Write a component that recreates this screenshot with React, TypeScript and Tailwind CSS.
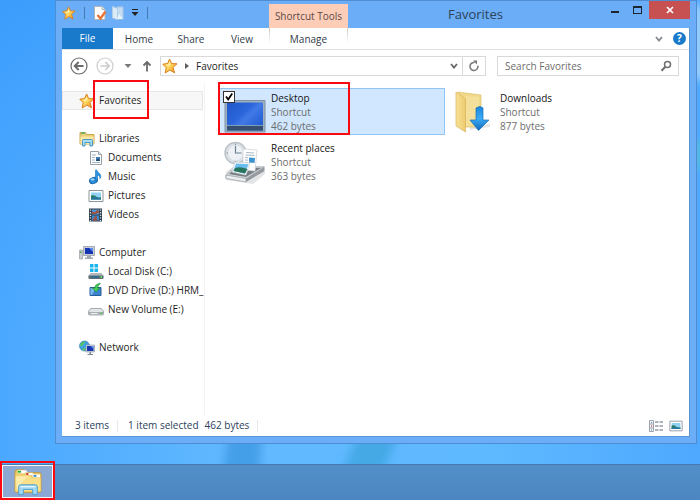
import { ReactNode } from "react";

type IconProps = { className?: string };

const StarIcon = ({ className = "size-4" }: IconProps) => (
  <svg viewBox="0 0 16 16" className={className}>
    <defs>
      <linearGradient id="star" x1="0" y1="0" x2="1" y2="1">
        <stop offset="0" stopColor="#ffc64a" />
        <stop offset="0.5" stopColor="#ffd85e" />
        <stop offset="1" stopColor="#f07f14" />
      </linearGradient>
    </defs>
    <path d="M7.6 1l2 4.6 5.4.2-4.1 3.6 1.7 5.4-4.8-2.7L3.2 15l1-5.3L.8 6.2l4.8-.7z" fill="url(#star)" stroke="#dc7f1c" strokeLinejoin="round" />
    <path d="M7.6 3.2l1 3-2.2 2.6-3-1.8 2.9-.7z" fill="#fff6c8" opacity="0.7" />
  </svg>
);

const PropertiesIcon = () => (
  <svg viewBox="0 0 14 16" className="h-4 w-3.5">
    <path d="M1.500 1.500h7.500l3 3v10h-10.500z" fill="#fdfdfd" stroke="#aeb4ba" />
    <path d="M9 1.500v3h3" fill="#dfe3e6" stroke="#aeb4ba" />
    <path d="M4.500 10l3 3.500L12.500 6.500" fill="none" stroke="#e6763a" strokeWidth="2.400" />
  </svg>
);

const NewFolderIcon = () => (
  <svg viewBox="0 0 14 16" className="h-4 w-3.5">
    <path d="M6 2h6v12H5z" fill="#c3dcf2" stroke="#a9c8e6" />
    <path d="M1.500 1.500l5 2v11l-5-1.500z" fill="#dcebf8" stroke="#b3cde6" />
    <path d="M8 9l4 5H6z" fill="#e8f2fb" />
  </svg>
);

const LibraryIcon = () => (
  <svg viewBox="0 0 16 16" className="size-4">
    <path d="M1 4V1.500h5.500L8 3.500h7V13H1z" fill="#e9cf7a" stroke="#c9a84e" />
    <path d="M2 2h4" stroke="#4fae5c" strokeWidth="1.500" />
    <path d="M1.500 5.500h13V13h-13z" fill="#fbe7a4" />
    <path d="M3.500 15V9.500q0-1 1-1h8q1 0 1 1V15h-2.500v-3.500H6V15z" fill="#a9dcf5" stroke="#4a96c4" />
  </svg>
);

const DocumentIcon = () => (
  <svg viewBox="0 0 16 16" className="size-4">
    <path d="M2.500 1.500h8l3 3v10h-11z" fill="#fff" stroke="#98a0a8" />
    <path d="M10.500 1.500v3h3" fill="#dfe5ea" stroke="#98a0a8" />
    <path d="M4 5h4M4 7.500h3M4 10h3M4 12.500h8" stroke="#9fb4c6" />
    <path d="M8 7h4v4H8z" fill="#3f7fb8" />
    <path d="M8 10l2-1.500 2 1.500v1H8z" fill="#254d72" />
  </svg>
);

const MusicIcon = () => (
  <svg viewBox="0 0 16 16" className="size-4">
    <ellipse cx="5.500" cy="11.500" rx="4" ry="3" fill="#2b8bd8" stroke="#1567ad" transform="rotate(-18 5.500 11.500)" />
    <path d="M7.500 11V1h1.300c.5 2.600 4.200 3.300 4 6.500-.1 1.400-1 2.200-1 2.200.6-2.200-.8-3.200-2.300-3.700V11z" fill="#2f95e0" stroke="#1b70b5" strokeWidth="0.600" />
    <ellipse cx="4.500" cy="10.500" rx="2" ry="1" fill="#a5dbfb" />
  </svg>
);

const PictureIcon = ({ className = "size-4" }: IconProps) => (
  <svg viewBox="0 0 16 16" className={className}>
    <path d="M1 2.500h14v11H1z" fill="#fff" stroke="#8d959b" />
    <path d="M3 4.500h10v7H3z" fill="#8fd2f2" />
    <path d="M3 7.500q3-1 5 1t5 .5v2.500H3z" fill="#2f7a62" />
    <path d="M3 10q5-1.500 10 .5v1H3z" fill="#2475a8" />
  </svg>
);

const VideoIcon = () => (
  <svg viewBox="0 0 16 16" className="size-4">
    <path d="M1 1.500h13v13H1z" fill="#2d3f4c" />
    <path d="M4 2.500h7v5H4z" fill="#4f9be0" />
    <path d="M4 8.500h7v5H4z" fill="#3d86cc" />
    <path d="M4 4l2.500 1.500L9 3l2 1v1.500L8 7H4zM5 12l2.500-3L9 10v3.500H5z" fill="#a3513f" />
    <path d="M2.500 2.500v12M12.500 2.500v12" stroke="#d6dee4" strokeWidth="1.300" strokeDasharray="1.300 1.300" />
  </svg>
);

const ComputerIcon = () => (
  <svg viewBox="0 0 16 16" className="size-4">
    <path d="M.5 5h3v9h-3z" fill="#c9ced2" stroke="#8b949b" strokeWidth="0.600" />
    <path d="M1 6.500h1.500V8H1z" fill="#48a84c" />
    <path d="M4.500 1.500h11v9h-11z" fill="#c8ccd4" stroke="#979da8" strokeWidth="0.800" />
    <path d="M6 3h8v6H6z" fill="#1535b5" />
    <path d="M10 3h4v4z" fill="#5b8df0" />
    <path d="M8 11h4v1.500h2V14H6v-1.500h2z" fill="#a3a9b1" />
  </svg>
);

const LocalDiskIcon = () => (
  <svg viewBox="0 0 16 16" className="size-4">
    <path d="M2 0h3.500v3.500H2zM6.500 0H10v3.500H6.500zM2 4.500h3.500V8H2zM6.500 4.500H10V8H6.500z" fill="#19b5ec" />
    <path d="M2.500 9h11l2 3v3H.5v-3z" fill="#b1b8be" />
    <path d="M.5 11.500h15V14l-1 1h-13l-1-1z" fill="#626e78" />
    <path d="M3 13h8" stroke="#2a6a94" strokeWidth="1.500" />
    <path d="M12.500 12h1.500v2h-1.500z" fill="#4fe05c" />
  </svg>
);

const DvdIcon = () => (
  <svg viewBox="0 0 16 16" className="size-4">
    <path d="M2 4.500h11v8H2z" fill="#3b84cf" stroke="#245d98" />
    <path d="M2.500 5h5L4 12H2.500z" fill="#79b7ec" />
    <path d="M12.500.5Q6.500 1 7 5H4.500L8 9l3.500-4h-2q0-2.500 3-4.500z" fill="#45cf59" stroke="#1d8c38" strokeWidth="0.700" />
  </svg>
);

const DriveIcon = () => (
  <svg viewBox="0 0 16 16" className="size-4">
    <path d="M3 6.500h10q2.500 1.500 2.500 3.500V12q0 1-1 1h-13q-1 0-1-1v-2Q.5 8 3 6.500z" fill="#e3e5e6" stroke="#92989c" strokeWidth="0.800" />
    <path d="M1 10h14v2.500H1z" fill="#a9afb3" />
    <path d="M3 11h6.500v1H3z" fill="#eef0f0" />
    <path d="M12.500 10.500H14v1.500h-1.500z" fill="#3ccc4e" />
  </svg>
);

const NetworkIcon = () => (
  <svg viewBox="0 0 16 16" className="size-4">
    <circle cx="5.500" cy="6" r="5" fill="#3fa2e6" stroke="#2a74ae" strokeWidth="0.600" />
    <path d="M2 3q2-2 4.500-1.500L5 4 2.500 6.500.8 6zM4 8l3 .5-1 2.200q-2 0-3-1z" fill="#56c36b" />
    <path d="M7 5h8.500v7H7z" fill="#d2d8e2" stroke="#8790a0" strokeWidth="0.600" />
    <path d="M8 6h6.500v5H8z" fill="#1736b0" />
    <path d="M11.500 6h3v3z" fill="#6b98f0" />
    <path d="M10.500 12h1.500v2h2v1H8.500v-1h2z" fill="#7f8894" />
  </svg>
);

const DesktopTileIcon = () => (
  <svg viewBox="0 0 44 44" className="size-11">
    <defs>
      <linearGradient id="screen" x1="0" y1="0" x2="1" y2="0.800">
        <stop offset="0" stopColor="#2156c8" />
        <stop offset="0.450" stopColor="#2b66dc" />
        <stop offset="0.600" stopColor="#4179e6" />
        <stop offset="1" stopColor="#1f5bd2" />
      </linearGradient>
    </defs>
    <path d="M2 10.500h40v31.500H2z" fill="#9fb0bf" stroke="#7d92a6" />
    <path d="M4 12.500h36v28H4z" fill="url(#screen)" />
    <path d="M4 35h36v5.500H4z" fill="#344f70" />
    <path d="M4 35.500h36" stroke="#7f9cbd" />
  </svg>
);

const RecentTileIcon = () => (
  <svg viewBox="0 0 44 44" className="size-11">
    <path d="M3 32l8-6h31v8L30 44 3 40z" fill="#9ea4a9" opacity="0.300" />
    <circle cx="12.500" cy="13" r="10.500" fill="#dde2e7" stroke="#bcc4ca" strokeWidth="1.500" />
    <circle cx="12.500" cy="13" r="8" fill="#edf1f5" stroke="#ced5db" strokeWidth="0.700" />
    <path d="M12.500 6v7h6" fill="none" stroke="#6b8194" strokeWidth="1.200" />
    <path d="M12.500 3.500v1.500M12.500 21v1.500M3.500 13H5M20 13h1.500" stroke="#7c8a96" />
    <path d="M3 35l9-8h29v4L23 41 3 38z" fill="#d5d8da" stroke="#a0a6aa" strokeWidth="0.800" />
    <path d="M6 34l7-6h25L23 37z" fill="#777e83" />
    <path d="M20 9l14 1-2 21-12-1z" fill="#fff" stroke="#c8ced3" strokeWidth="0.700" />
    <path d="M23 12.500l8 .5M22.500 15l9 .5M22 17.500l3 .2M22 20l3 .2M22 22.500l3 .2" stroke="#a9b8c4" />
    <path d="M26 17.500l6 .5-.5 5-5.500-.5z" fill="#3c93cd" />
    <path d="M12 22l15 1-4 12-14-3z" fill="#f7fbfd" stroke="#c8ced3" strokeWidth="0.700" />
    <path d="M13 23.500l12.500.7-3.500 9.300L10.500 31z" fill="#6bbdf0" />
    <path d="M12 28q5-2 12.500 1L22 33.500 10.500 31z" fill="#27745d" />
    <path d="M3 35l20 3.500V42L3 38.500z" fill="#eceeef" stroke="#a0a6aa" strokeWidth="0.800" />
    <path d="M23 38.500L41 27v4L23 42z" fill="#949a9f" />
  </svg>
);

const DownloadsTileIcon = () => (
  <svg viewBox="0 0 44 44" className="size-11">
    <defs>
      <linearGradient id="flap" x1="0" y1="0" x2="1" y2="0">
        <stop offset="0" stopColor="#f9e196" />
        <stop offset="1" stopColor="#eccb70" />
      </linearGradient>
      <linearGradient id="arrow" x1="0" y1="0" x2="0" y2="1">
        <stop offset="0" stopColor="#1b86dc" />
        <stop offset="0.500" stopColor="#3caaf4" />
        <stop offset="1" stopColor="#1169bd" />
      </linearGradient>
    </defs>
    <path d="M18 36l20-2v3l-20 3z" fill="#000" opacity="0.100" />
    <path d="M6 2l23 3v32H12z" fill="#f0d98a" stroke="#dcc06c" strokeWidth="0.700" />
    <path d="M14 6l13 1v29H14z" fill="#f4e09a" />
    <path d="M4 2l9.500 7V42L4 36z" fill="url(#flap)" stroke="#d9b65c" strokeWidth="0.700" />
    <path d="M24 18q4-3 7 0v12h6L26.500 40.500 18 30h6z" fill="url(#arrow)" stroke="#176db6" strokeWidth="0.700" />
  </svg>
);

const ExplorerIcon = () => (
  <svg viewBox="0 0 32 30" className="h-7 w-8">
    <path d="M2 4q0-2 2-2h8l2 3h14q2 0 2 2v17q0 2-2 2H4q-2 0-2-2z" fill="#eecb66" stroke="#c39a3d" />
    <path d="M5 2.500h9l2 3H5z" fill="#fff" />
    <path d="M5 3h3.500v2H5z" fill="#27b13b" />
    <path d="M13 5h8l2 3H13z" fill="#fff" stroke="#d3ad55" strokeWidth="0.600" />
    <path d="M14 5.500h2.500v2H14z" fill="#d93a2b" />
    <path d="M21 7h8v3h-8z" fill="#fff" />
    <path d="M22 7.500h3v2h-3z" fill="#3c8fd9" />
    <path d="M2.500 8H18l2 3h9.500v14H2.500z" fill="#f8df88" />
    <path d="M3 9l12 0-11 14z" fill="#fdf0b8" opacity="0.700" />
    <path d="M6 28.500V20q0-2 2-2h16q2 0 2 2v8.500h-5V23H11v5.500z" fill="#9ed8f4" stroke="#4e9cc8" />
    <path d="M8 20h16" stroke="#dff4fd" strokeWidth="1.500" />
  </svg>
);

const BackIcon = () => (
  <svg viewBox="0 0 18 18" className="size-[18px]" fill="none" stroke="currentColor">
    <circle cx="9" cy="9" r="8" strokeWidth="1.200" />
    <path d="M13.500 9H5M8.700 5L4.700 9l4 4" strokeWidth="1.900" />
  </svg>
);

const ForwardIcon = () => (
  <svg viewBox="0 0 18 18" className="size-[18px]" fill="none" stroke="currentColor">
    <circle cx="9" cy="9" r="8" strokeWidth="1.200" />
    <path d="M4.500 9H13M9.300 5l4 4-4 4" strokeWidth="1.700" />
  </svg>
);

const Chevron = () => (
  <svg viewBox="0 0 8 8" className="size-2" fill="none" stroke="currentColor" strokeWidth="1.800">
    <path d="M1 2l3 3.500L7 2" />
  </svg>
);

const DownTriangle = () => (
  <svg viewBox="0 0 8 8" className="size-2" fill="currentColor">
    <path d="M.5 2h7L4 6z" />
  </svg>
);

const Wallpaper = () => (
  <svg viewBox="0 0 700 500" preserveAspectRatio="none" className="absolute inset-0 size-full">
    <defs>
      <linearGradient id="sky" x1="0" y1="0" x2="1" y2="0">
        <stop offset="0" stopColor="#4ba8ff" />
        <stop offset="0.350" stopColor="#62b9ff" />
        <stop offset="0.700" stopColor="#5fb9ff" />
        <stop offset="1" stopColor="#4ea8ff" />
      </linearGradient>
      <linearGradient id="shade" x1="0" y1="0" x2="0" y2="1">
        <stop offset="0" stopColor="#2c92fa" stopOpacity="0.500" />
        <stop offset="1" stopColor="#4ba8ff" stopOpacity="0" />
      </linearGradient>
      <filter id="soft">
        <feGaussianBlur stdDeviation="5" />
      </filter>
    </defs>
    <path d="M0 0h700v500H0z" fill="url(#sky)" />
    <path d="M0 0h60v400H0z" fill="url(#shade)" />
    <path d="M228 430h34l-4 70h-38z" fill="#449fe8" filter="url(#soft)" />
    <path d="M360 430h40l-28 70h-42z" fill="#44a9e6" filter="url(#soft)" />
    <path d="M694 5h6v75h-6z" fill="#e6f6ff" filter="url(#soft)" />
    <path d="M694 140h6v30h-6z" fill="#57c9c4" filter="url(#soft)" />
  </svg>
);

type NavItem = { label: string; icon: ReactNode };

const NAV_GROUPS: { root: NavItem; children: NavItem[] }[] = [
  {
    root: { label: "Libraries", icon: <LibraryIcon /> },
    children: [
      { label: "Documents", icon: <DocumentIcon /> },
      { label: "Music", icon: <MusicIcon /> },
      { label: "Pictures", icon: <PictureIcon /> },
      { label: "Videos", icon: <VideoIcon /> },
    ],
  },
  {
    root: { label: "Computer", icon: <ComputerIcon /> },
    children: [
      { label: "Local Disk (C:)", icon: <LocalDiskIcon /> },
      { label: "DVD Drive (D:) HRM_", icon: <DvdIcon /> },
      { label: "New Volume (E:)", icon: <DriveIcon /> },
    ],
  },
  { root: { label: "Network", icon: <NetworkIcon /> }, children: [] },
];

const TitleBar = () => (
  <header className="flex h-[27px] items-start">
    <div className="flex flex-1 items-center gap-2 pt-1">
      <StarIcon className="size-3.5" />
      <span className="h-3 w-px bg-[#4679b0]" />
      <button aria-label="Properties"><PropertiesIcon /></button>
      <button aria-label="New folder" className="-ml-1"><NewFolderIcon /></button>
      <button aria-label="Customize toolbar" className="-ml-0.5 flex flex-col items-center text-[#222]">
        <span className="h-px w-1.5 bg-[#222]" />
        <DownTriangle />
      </button>
      <span className="h-3 w-px bg-[#4679b0]" />
    </div>
    <h1 className="pt-[3px] pr-[102px] text-[13px] leading-5 text-[#2c4358]">Favorites</h1>
    <div className="flex items-start">
      <button aria-label="Minimize" className="flex h-4 w-5 items-end justify-center pb-1">
        <span className="h-0.5 w-2 bg-[#1d2630]" />
      </button>
      <button aria-label="Maximize" className="flex h-[18px] w-6 items-center justify-center">
        <span className="h-2 w-[9px] border border-t-2 border-[#1d2630]" />
      </button>
      <button aria-label="Close" className="flex h-[18px] w-[41px] items-center justify-center bg-[#c75050] text-white">
        <svg viewBox="0 0 8 8" className="size-2" stroke="currentColor" strokeWidth="1.700">
          <path d="M1 1l6 6M7 1L1 7" />
        </svg>
      </button>
    </div>
  </header>
);

const Ribbon = () => (
  <nav className="flex h-[22px] items-stretch border-b border-[#e2e3e4] text-[10px] text-[#333c48]">
    <button className="w-[51px] bg-[#1979ca] text-white">File</button>
    <button className="w-[52px] pt-0.5">Home</button>
    <button className="w-[52px] pt-0.5">Share</button>
    <button className="w-[50px] pt-0.5">View</button>
    <div className="relative ml-0.5 w-[79px]">
      <span className="absolute bottom-full left-0 flex h-6 w-full items-center justify-center bg-[#fdcdb8] text-[#5c4a48]">
        Shortcut Tools
      </span>
      <span className="absolute top-0 left-0 h-4 w-px bg-linear-to-b from-[#c9c9c9] to-white" />
      <span className="absolute top-0 right-0 h-4 w-px bg-linear-to-b from-[#c9c9c9] to-white" />
      <button className="size-full pt-0.5">Manage</button>
    </div>
    <div className="ml-auto flex items-center gap-2.5 pr-[3px] text-[#85898d]">
      <button aria-label="Expand the ribbon"><Chevron /></button>
      <button aria-label="Help" className="flex size-[13px] items-center justify-center rounded-full bg-[#1979ca] text-[10px] font-bold text-white">
        ?
      </button>
    </div>
  </nav>
);

const AddressRow = () => (
  <div className="flex items-center pt-1.5 pr-2.5 pl-2 text-[10px] text-[#1e1e1e]">
    <button aria-label="Back" className="text-[#6b6b6b]"><BackIcon /></button>
    <button aria-label="Forward" className="ml-2 text-[#cdcdcd]"><ForwardIcon /></button>
    <button aria-label="Recent locations" className="ml-2.5 text-[#7a7a7a]"><DownTriangle /></button>
    <button aria-label="Up" className="ml-2.5 text-[#6b6b6b]">
      <svg viewBox="0 0 10 12" className="h-3 w-2.5" fill="none" stroke="currentColor" strokeWidth="1.800">
        <path d="M5 11.500V2M1.500 5.500L5 2l3.500 3.500" />
      </svg>
    </button>
    <div className="ml-2 flex h-5 flex-1 items-center border border-[#d9d9d9]">
      <StarIcon className="ml-px size-4" />
      <svg viewBox="0 0 6 8" className="ml-1.5 h-2 w-1.5" fill="#5e5e5e">
        <path d="M1 1l4 3-4 3z" />
      </svg>
      <a href="#favorites" className="ml-1.5 flex-1">Favorites</a>
      <button aria-label="Previous locations" className="px-1 text-[#666]"><Chevron /></button>
      <button aria-label="Refresh" className="flex h-full w-[23px] items-center justify-center border-l border-[#d9d9d9] text-[#777]">
        <svg viewBox="0 0 12 12" className="size-3" fill="none" stroke="currentColor" strokeWidth="1.500">
          <path d="M6.500 2.500a4 4 0 1 0 3.400 3.200" />
          <path d="M5 .5h4v4z" fill="currentColor" stroke="none" />
        </svg>
      </button>
    </div>
    <label className="ml-[11px] flex h-5 w-[182px] items-center border border-[#d9d9d9] pr-1.5 pl-[7px]">
      <input aria-label="Search" placeholder="Search Favorites" className="min-w-0 flex-1 outline-none placeholder:text-[#6d6d6d]" />
      <svg viewBox="0 0 12 12" className="size-3" fill="none" stroke="#6e6e6e" strokeWidth="1.500">
        <circle cx="7.500" cy="4.500" r="3" />
        <path d="M5.300 6.800L1.500 10.800" strokeWidth="2" />
      </svg>
    </label>
  </div>
);

const NavRow = ({ item, child = false }: { item: NavItem; child?: boolean }) => (
  <a href="#nav" className={`flex h-[19px] items-center gap-1 whitespace-nowrap ${child ? "pl-[26px]" : "pl-[17px]"}`}>
    {item.icon}
    {item.label}
  </a>
);

const Sidebar = () => (
  <aside className="w-[143px] shrink-0 border-r border-[#f3f3f3] pt-2 text-[10px] text-[#1e1e1e]">
    <div className="relative mr-px border border-[#e6e6e6] bg-[#f7f7f7]">
      <a href="#favorites" className="flex h-[17px] items-center gap-1 pl-4">
        <StarIcon />
        Favorites
      </a>
      <span className="pointer-events-none absolute -top-3 left-[30px] h-[39px] w-14 border-2 border-[#fa0a10]" />
    </div>
    {NAV_GROUPS.map((group) => (
      <div key={group.root.label} className="mt-[19px] overflow-hidden">
        <NavRow item={group.root} />
        {group.children.map((item) => (
          <NavRow key={item.label} item={item} child />
        ))}
      </div>
    ))}
  </aside>
);

type TileProps = { name: string; size: string; icon: ReactNode; selected?: boolean };

const Tile = ({ name, size, icon, selected = false }: TileProps) => (
  <div className={`relative flex h-[47px] items-center gap-1 border pl-[3px] ${selected ? "border-[#90c5f5] bg-[#d0e7ff]" : "border-transparent"}`}>
    {icon}
    <div className="text-[10px] leading-[14px] text-[#6d6d6d]">
      <p className="text-[#151515]">{name}</p>
      <p>Shortcut</p>
      <p>{size}</p>
    </div>
    {selected && (
      <>
        <input
          type="checkbox"
          aria-label={`Select ${name}`}
          defaultChecked
          className="peer absolute top-0.5 left-[3px] size-3 appearance-none border border-[#333] bg-white"
        />
        <svg viewBox="0 0 12 12" className="pointer-events-none absolute top-0.5 left-[3px] size-3 opacity-0 peer-checked:opacity-100" fill="none" stroke="#000" strokeWidth="1.800">
          <path d="M3 5.500l2.200 3L9.200 2.500" />
        </svg>
        <span className="pointer-events-none absolute -top-[7px] -left-0.5 h-[53px] w-[132px] border-2 border-[#fa0a10]" />
      </>
    )}
  </div>
);

const StatusBar = () => (
  <footer className="flex h-[21px] items-center pr-1.5 pl-[13px] text-[10px] text-[#2b3f5c]">
    <span>3 items</span>
    <span className="ml-2 h-3 border-l border-[#e8e8e8] pl-2.5" />
    <span>1 item selected</span>
    <span className="ml-1.5">462 bytes</span>
    <span className="ml-2 h-3 border-l border-[#e8e8e8]" />
    <button aria-label="Details view" className="ml-auto">
      <svg viewBox="0 0 14 12" className="h-3 w-3.5" fill="none">
        <path d="M.5.5h4v11h-4z" fill="#f4f4f4" stroke="#9aa5b0" />
        <path d="M.5 4h4M.5 8h4" stroke="#9aa5b0" />
        <path d="M2 5.500h1.200v1.200H2z" fill="#d14a4a" />
        <path d="M2 2h1v1H2zM2 9.500h1v1H2z" fill="#5f88ad" />
        <path d="M6 2h3.500M10.500 2H14M6 6h3.500M10.500 6H14M6 10h3.500M10.500 10H14" stroke="#5e6878" strokeWidth="1.200" />
      </svg>
    </button>
    <button aria-label="Large icons view" className="ml-1.5"><PictureIcon className="size-3.5" /></button>
  </footer>
);

export default function App() {
  return (
    <div className="relative isolate flex min-h-screen flex-col overflow-hidden font-['Open_Sans',sans-serif]">
      <Wallpaper />
      <main className="relative mr-[3px] mb-5 ml-[55px] flex flex-1 flex-col border border-[#4f8dd0] bg-[#6badf7] px-1.5 pb-1.5">
        <TitleBar />
        <section className="flex flex-1 flex-col border-r border-b border-[#5a95d8] bg-white">
          <Ribbon />
          <AddressRow />
          <div className="mt-[7px] flex flex-1">
            <Sidebar />
            <div className="grid flex-1 auto-rows-min grid-cols-[repeat(auto-fill,226px)] gap-[3px] pt-[5px] pl-3.5">
              <Tile name="Desktop" size="462 bytes" icon={<DesktopTileIcon />} selected />
              <Tile name="Downloads" size="877 bytes" icon={<DownloadsTileIcon />} />
              <Tile name="Recent places" size="363 bytes" icon={<RecentTileIcon />} />
            </div>
          </div>
          <StatusBar />
        </section>
      </main>
      <footer className="relative flex h-9 border-t border-[#4679b0] bg-linear-to-b from-[#528fc8] to-[#4d86c1] px-0.5 pb-0.5">
        <button aria-label="File Explorer" className="flex w-[51px] items-center justify-center border border-white/90 bg-[#8ba9d3]">
          <ExplorerIcon />
        </button>
        <span className="pointer-events-none absolute -top-1 bottom-0 left-0 w-[55px] border-2 border-[#fa0a10]" />
      </footer>
    </div>
  );
}
